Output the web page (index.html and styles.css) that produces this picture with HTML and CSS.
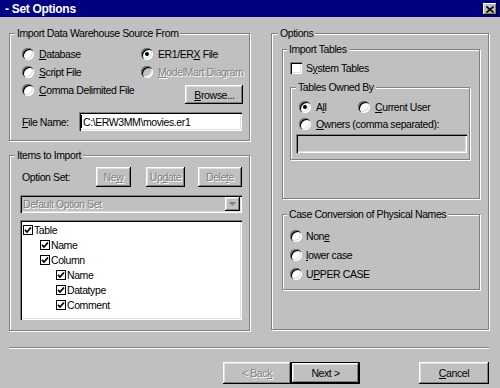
FILE: index.html
```html
<!DOCTYPE html>
<html>
<head>
<meta charset="utf-8">
<link rel="stylesheet" href="styles.css">
</head>
<body>
<div class="dialog">
  <div class="titlebar">
    <span class="title">- Set Options</span>
    <span class="close"><svg width="8" height="7" viewBox="0 0 8 7"><path d="M0.5 0.5 L7.5 6.5 M7.5 0.5 L0.5 6.5" stroke="#000" stroke-width="1.6" fill="none"/></svg></span>
  </div>

  <div class="main">
    <div class="col-left">
      <section class="group g-source">
        <div class="group-title">Import Data Warehouse Source From</div>
        <div class="source-grid">
          <div class="opt"><span class="radio"></span><span><u>D</u>atabase</span></div>
          <div class="opt"><span class="radio checked"></span><span>ER1/ER<u>X</u> File</span></div>
          <div class="opt"><span class="radio"></span><span><u>S</u>cript File</span></div>
          <div class="opt disabled"><span class="radio"></span><span><u>M</u>odelMart Diagram</span></div>
          <div class="opt"><span class="radio"></span><span><u>C</u>omma Delimited File</span></div>
          <div class="browse-cell"><span class="btn browse"><u>B</u>rowse...</span></div>
        </div>
        <div class="file-row">
          <span class="file-label"><u>F</u>ile Name:</span>
          <div class="field file-field"><span class="caret"></span>C:\ERW3MM\movies.er1</div>
        </div>
      </section>

      <section class="group g-items">
        <div class="group-title">Items to Import</div>
        <div class="optset-row">
          <span class="optset-label">Option Set:</span>
          <span class="btn dis b-new">Ne<u>w</u></span>
          <span class="btn dis b-update">Up<u>d</u>ate</span>
          <span class="btn dis b-delete">Dele<u>t</u>e</span>
        </div>
        <div class="combo">
          <span class="combo-text">Default Option Set</span>
          <span class="combo-btn"><svg width="7" height="4" viewBox="0 0 7 4"><path d="M0 0 H7 L3.5 4 Z" fill="#808080"/></svg></span>
        </div>
        <div class="tree">
          <div class="tree-row lvl0"><span class="tcheck"><svg width="8" height="8" viewBox="0 0 8 8"><path d="M1 3.8 L3 6 L7 1.5" stroke="#000" stroke-width="1.8" fill="none"/></svg></span><span>Table</span></div>
          <div class="tree-row lvl1"><span class="tcheck"><svg width="8" height="8" viewBox="0 0 8 8"><path d="M1 3.8 L3 6 L7 1.5" stroke="#000" stroke-width="1.8" fill="none"/></svg></span><span>Name</span></div>
          <div class="tree-row lvl1"><span class="tcheck"><svg width="8" height="8" viewBox="0 0 8 8"><path d="M1 3.8 L3 6 L7 1.5" stroke="#000" stroke-width="1.8" fill="none"/></svg></span><span>Column</span></div>
          <div class="tree-row lvl2"><span class="tcheck"><svg width="8" height="8" viewBox="0 0 8 8"><path d="M1 3.8 L3 6 L7 1.5" stroke="#000" stroke-width="1.8" fill="none"/></svg></span><span>Name</span></div>
          <div class="tree-row lvl2"><span class="tcheck"><svg width="8" height="8" viewBox="0 0 8 8"><path d="M1 3.8 L3 6 L7 1.5" stroke="#000" stroke-width="1.8" fill="none"/></svg></span><span>Datatype</span></div>
          <div class="tree-row lvl2"><span class="tcheck"><svg width="8" height="8" viewBox="0 0 8 8"><path d="M1 3.8 L3 6 L7 1.5" stroke="#000" stroke-width="1.8" fill="none"/></svg></span><span>Comment</span></div>
        </div>
      </section>
    </div>

    <div class="col-right">
      <section class="group g-options">
        <div class="group-title">Options</div>
        <section class="group g-import">
          <div class="group-title">Import Tables</div>
          <div class="opt sys-row"><span class="check3d"></span><span>S<u>y</u>stem Tables</span></div>
          <section class="group g-owned">
            <div class="group-title">Tables Owned By</div>
            <div class="owned-row">
              <div class="opt o-all"><span class="radio checked"></span><span>A<u>l</u>l</span></div>
              <div class="opt"><span class="radio"></span><span><u>C</u>urrent User</span></div>
            </div>
            <div class="opt owners-row"><span class="radio"></span><span><u>O</u>wners (comma separated):</span></div>
            <div class="field owners-field"></div>
          </section>
        </section>
        <section class="group g-case">
          <div class="group-title">Case Conversion of Physical Names</div>
          <div class="opt case-row"><span class="radio"></span><span>Non<u>e</u></span></div>
          <div class="opt case-row"><span class="radio"></span><span><u>l</u>ower case</span></div>
          <div class="opt case-row"><span class="radio"></span><span>U<u>P</u>PER CASE</span></div>
        </section>
      </section>
    </div>
  </div>

  <div class="sep"></div>

  <div class="footer">
    <span class="btn dis b-back">&lt; Bac<u>k</u></span>
    <span class="btn default b-next">Next &gt;</span>
    <span class="btn b-cancel"><u>C</u>ancel</span>
  </div>
</div>
</body>
</html>
```

FILE: styles.css
```css
* { box-sizing: border-box; }
html, body { margin: 0; padding: 0; }
body {
  width: 500px;
  height: 388px;
  overflow: hidden;
  background: #c0c0c0;
  font-family: "Liberation Sans", Arial, sans-serif;
  font-size: 10.5px;
  letter-spacing: -0.4px;
  color: #000;
}
.dialog { width: 500px; height: 388px; background: #c0c0c0; }

.titlebar {
  height: 17px;
  background: #000080;
  display: flex;
  align-items: center;
  justify-content: space-between;
  padding: 0 3px 0 5px;
}
.title { color: #fff; font-weight: bold; font-size: 12px; letter-spacing: -0.3px; }
.close {
  width: 14px;
  height: 12px;
  background: #c0c0c0;
  display: flex;
  align-items: center;
  justify-content: center;
  box-shadow: inset -1px -1px #000, inset 1px 1px #fff, inset -2px -2px #808080;
  margin-top: 1px;
}

.main {
  display: flex;
  align-items: flex-start;
  gap: 21px;
  padding: 0 12px 0 9px;
  margin-top: 16px;
}
.col-left { width: 241px; display: flex; flex-direction: column; }
.col-right { width: 219px; }

/* etched group box; the title sits on the top border line */
.group {
  border: 1px solid #808080;
  box-shadow: inset 1px 1px #fff, 1px 1px #fff;
}
.group-title {
  width: fit-content;
  height: 13px;
  line-height: 13px;
  margin-top: -7px;
  padding: 0 2px;
  background: #c0c0c0;
  white-space: nowrap;
}

/* generic options */
.opt { display: flex; align-items: center; gap: 5px; white-space: nowrap; }
.opt.disabled { color: #808080; text-shadow: 1px 1px 0 #fff; }
.opt.disabled .radio { background: #c0c0c0; }

.radio {
  flex: none;
  position: relative;
  width: 12px;
  height: 12px;
  border-radius: 50%;
  background: #fff;
  box-shadow: inset 1px 1px #808080, inset 2px 2px #000, inset -1px -1px #fff, inset -2px -2px #dfdfdf;
}
.radio.checked::after {
  content: "";
  position: absolute;
  left: 4px;
  top: 4px;
  width: 4px;
  height: 4px;
  border-radius: 50%;
  background: #000;
}
.check3d {
  flex: none;
  width: 12px;
  height: 12px;
  background: #fff;
  box-shadow: inset 1px 1px #808080, inset 2px 2px #000, inset -1px -1px #fff, inset -2px -2px #dfdfdf;
}

.btn {
  display: flex;
  align-items: center;
  justify-content: center;
  background: #c0c0c0;
  white-space: nowrap;
  box-shadow: inset -1px -1px #000, inset 1px 1px #fff, inset -2px -2px #808080, inset 2px 2px #dfdfdf;
}
.btn.dis { color: #808080; text-shadow: 1px 1px 0 #fff; }
.btn.default { border: 1px solid #000; }

.field {
  background: #fff;
  box-shadow: inset 1px 1px #808080, inset 2px 2px #000, inset -1px -1px #fff, inset -2px -2px #dfdfdf;
}

/* group 1: line at y=33, bottom line at y=140 */
.g-source { padding: 0 7px 9px 12px; }
.g-source > .group-title { margin-left: -7px; margin-bottom: 5px; }
.source-grid {
  display: grid;
  grid-template-columns: 119px 1fr;
  grid-template-rows: 18px 18px 23px;
}
.source-grid > .opt:nth-child(5) { align-self: start; height: 18px; }
.browse-cell { display: flex; justify-content: flex-end; }
.browse { width: 58px; height: 19px; margin-top: 4px; }
.file-row { display: flex; align-items: center; margin-top: 8px; }
.file-label { width: 57px; }
.file-field {
  width: 163px;
  height: 19px;
  display: flex;
  align-items: center;
  padding-left: 2px;
}
.caret { width: 1px; height: 13px; background: #000; margin-right: 1px; }

/* group 2: line at y=155, bottom at y=330 */
.g-items { margin-top: 14px; padding: 0 7px 10px 10px; }
.g-items > .group-title { margin-left: -5px; margin-bottom: 5px; }
.optset-row { display: flex; align-items: center; height: 20px; }
.optset-label { width: 76px; padding-left: 2px; }
.b-new { width: 35px; height: 20px; }
.b-update { width: 39px; height: 20px; margin-left: 15px; }
.b-delete { width: 44px; height: 20px; margin-left: 13px; }
.combo {
  margin-top: 8px;
  height: 18px;
  width: 222px;
  display: flex;
  align-items: center;
  padding: 2px;
  background: #c0c0c0;
  box-shadow: inset 1px 1px #808080, inset 2px 2px #000, inset -1px -1px #fff, inset -2px -2px #dfdfdf;
}
.combo-text { flex: 1; padding-left: 1px; color: #808080; text-shadow: 1px 1px 0 #fff; }
.combo-btn {
  width: 15px;
  height: 14px;
  display: flex;
  align-items: center;
  justify-content: center;
  background: #c0c0c0;
  box-shadow: inset -1px -1px #000, inset 1px 1px #fff, inset -2px -2px #808080, inset 2px 2px #dfdfdf;
}
.tree {
  margin-top: 7px;
  width: 222px;
  height: 100px;
  padding: 2px;
  background: #fff;
  box-shadow: inset 1px 1px #808080, inset 2px 2px #000, inset -1px -1px #fff, inset -2px -2px #dfdfdf;
}
.tree-row { display: flex; align-items: center; height: 15px; gap: 1px; }
.tree-row.lvl0 { padding-left: 1px; }
.tree-row.lvl1 { padding-left: 18px; }
.tree-row.lvl2 { padding-left: 34px; }
.tcheck {
  flex: none;
  width: 10px;
  height: 10px;
  border: 1px solid #000;
  background: #fff;
  display: flex;
  align-items: center;
  justify-content: center;
}

/* right column */
.g-options { padding: 0 8px 39px 10px; }
.g-options > .group-title { margin-left: -4px; margin-bottom: 9px; }

.g-import { width: 198px; padding: 0 8px 38px 7px; }
.g-import > .group-title { margin-left: -3px; margin-bottom: 4px; }
.sys-row { height: 16px; gap: 4px; }

.g-owned { width: 180px; margin-top: 11px; padding: 0 5px 6px 8px; }
.g-owned > .group-title { margin-left: -3px; margin-bottom: 4px; }
.owned-row { display: flex; height: 17px; }
.o-all { width: 59px; }
.owners-row { height: 18px; }
.owners-field { margin-top: 1px; margin-left: -3px; width: 171px; height: 19px; background: #c0c0c0; }

.g-case { width: 198px; margin-top: 15px; padding: 0 8px 6px 7px; }
.g-case > .group-title { margin-left: -3px; margin-bottom: 5px; }
.case-row { height: 19px; gap: 4px; }

.sep {
  margin: 16px 11px 0 9px;
  height: 2px;
  border-top: 1px solid #808080;
  border-bottom: 1px solid #fff;
}
.footer {
  display: flex;
  margin-top: 13px;
  padding-left: 223px;
}
.b-back { width: 68px; height: 22px; }
.b-next { width: 69px; height: 22px; }
.b-cancel { width: 70px; height: 22px; margin-left: 59px; }
```
